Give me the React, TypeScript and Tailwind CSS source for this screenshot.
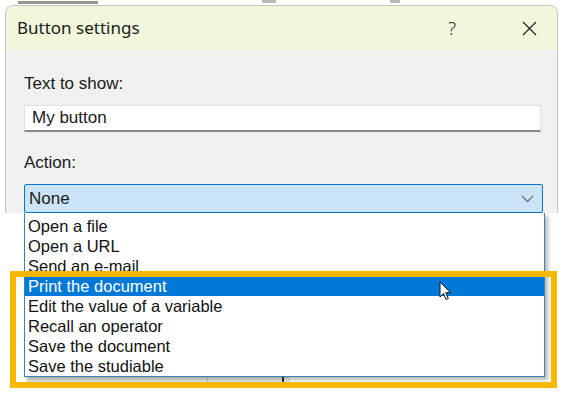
import React from "react";

const ITEMS = [
  "Open a file",
  "Open a URL",
  "Send an e-mail",
  "Print the document",
  "Edit the value of a variable",
  "Recall an operator",
  "Save the document",
  "Save the studiable",
];

const SELECTED = "Print the document";

export default function App() {
  return (
    <div className="relative h-[393px] w-[566px] overflow-hidden bg-white font-['Liberation_Sans',Arial,sans-serif] text-[#1a1a1a]">
      {/* bits of the window behind */}
      <div className="absolute left-[18px] top-[1px] h-[3px] w-[80px] bg-[#6a6a6a] opacity-70" />
      <div className="absolute left-[262px] top-0 h-[3px] w-[14px] bg-[#8a8a8a] opacity-60" />
      <div className="absolute left-[390px] top-0 h-[3px] w-[10px] bg-[#8a8a8a] opacity-60" />

      <div className="ml-[5px] mt-[5px] h-[208px] w-[553px] overflow-hidden rounded-t-[8px] border border-b-0 border-[#c4c4c4] bg-[#f0f0f0]">
        <div className="flex h-[44px] items-center bg-[#f0f7da] pl-[11px] pr-[16px] font-['Noto_Sans',sans-serif] text-[17px] text-[#1b1b1b]">
          <span className="flex-1">Button settings</span>
          <span className="mr-[66px] text-[19px] font-light text-[#333]">?</span>
          <svg width="15" height="15" viewBox="0 0 15 15" className="mr-[4px]">
            <path d="M1 1 L14 14 M14 1 L1 14" stroke="#222" strokeWidth="1.2" />
          </svg>
        </div>

        <div className="flex flex-col pl-[18px] pr-[14px] pt-[24px] text-[17px]">
          <div className="leading-[20px]">Text to show:</div>
          <div className="mt-[11px] flex h-[27px] w-[517px] items-center border border-b-2 border-[#e2e2e2] border-b-[#8c8c8c] bg-white pl-[7px]">
            My button
          </div>
          <div className="mt-[21px] leading-[20px]">Action:</div>
          <div className="mt-[11px] flex h-[29px] w-[519px] shrink-0 items-center justify-between rounded-[2px] border border-[#0a74d0] bg-[#cce4f7] pl-[4px] pr-[8px]">
            <span>None</span>
            <svg width="13" height="8" viewBox="0 0 13 8">
              <path d="M1 1 L6.5 6.5 L12 1" fill="none" stroke="#707070" strokeWidth="1.3" />
            </svg>
          </div>
        </div>
      </div>

      {/* dialog behind the list */}
      <div className="absolute left-[26px] top-[375px] flex h-[10px] w-[264px] bg-[#ececec]">
        <div className="w-[182px] border-r border-[#c8c8c8]" />
        <div className="ml-auto mr-[6px] w-[2px] bg-[#333]" />
      </div>

      {/* dropdown list */}
      <div className="absolute left-[24px] top-[213px] w-[521px] border border-t-0 border-[#3c7fb1] bg-white pt-[3px] text-[16.5px] shadow-[3px_3px_4px_rgba(0,0,0,0.28)]">
        {ITEMS.map((item) => (
          <div
            key={item}
            className={
              item === SELECTED
                ? "h-[20px] bg-[#0078d7] pl-[3px] leading-[20px] text-white"
                : "h-[20px] pl-[3px] leading-[20px] text-[#111]"
            }
          >
            {item}
          </div>
        ))}
      </div>

      {/* highlight frame */}
      <div className="absolute left-[10px] top-[271px] h-[117px] w-[547px] border-[6px] border-[#f6b800]" />

      {/* mouse pointer */}
      <svg width="13" height="20" viewBox="0 0 13 20" className="absolute left-[439px] top-[281px]">
        <path
          d="M1 1 L1 16 L4.5 12.5 L7 18.5 L9.3 17.5 L6.8 11.7 L11.5 11.7 Z"
          fill="white"
          stroke="#111"
          strokeWidth="1"
          strokeLinejoin="round"
        />
      </svg>
    </div>
  );
}
